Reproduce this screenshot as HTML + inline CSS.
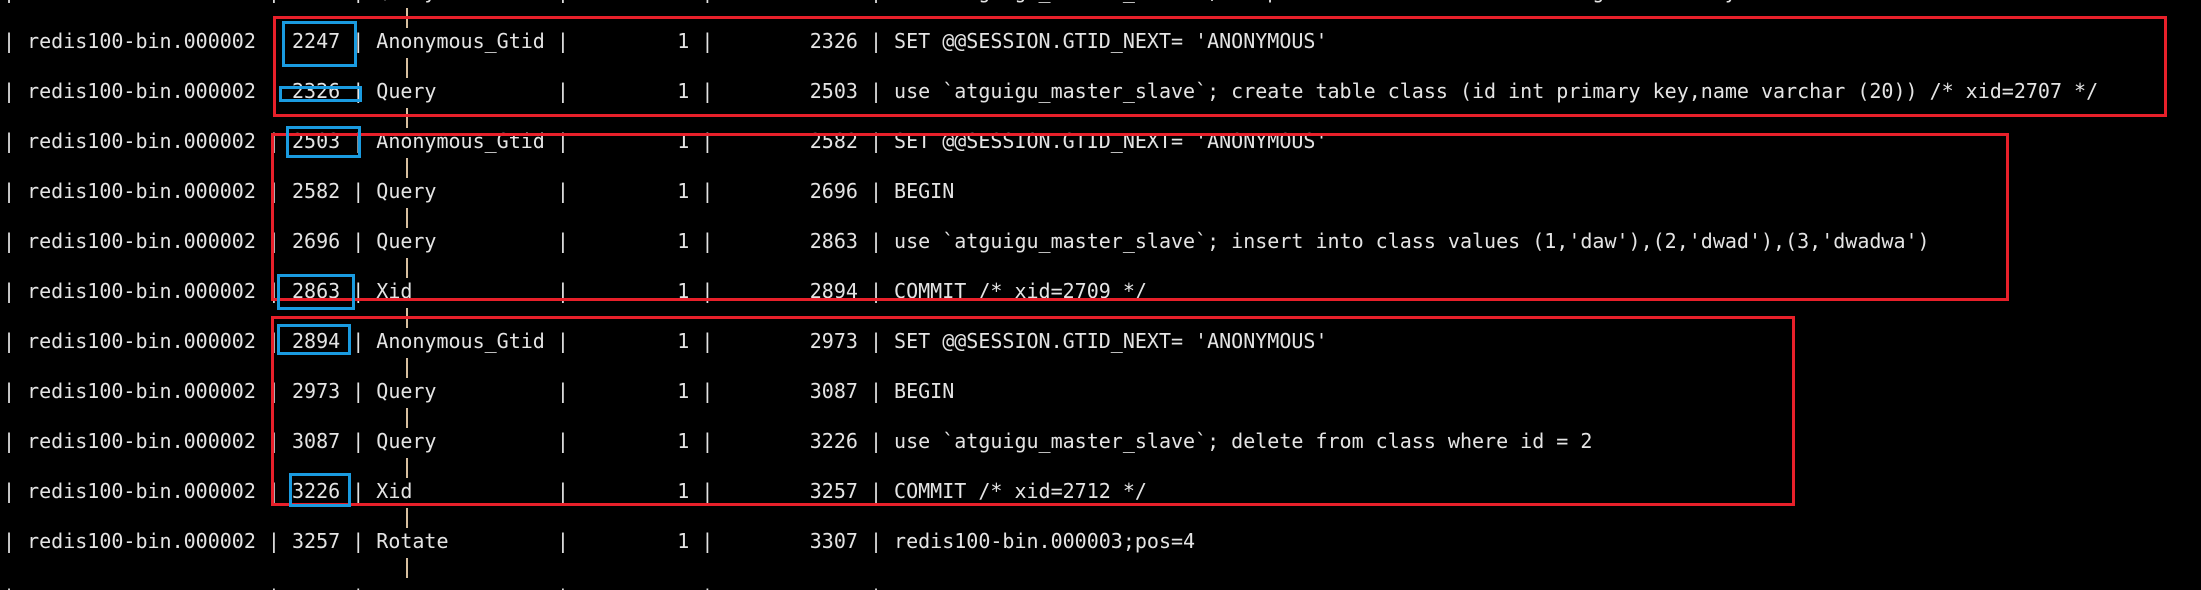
<!DOCTYPE html>
<html><head><meta charset="utf-8">
<style>
html,body{margin:0;padding:0;background:#000;width:2201px;height:590px;overflow:hidden;position:relative}
.r{position:absolute;left:3px;height:50px;line-height:50px;white-space:pre;font-family:"DejaVu Sans Mono","Liberation Mono",monospace;font-size:20px;color:#e4e4e4}
.t{position:absolute;left:406px;width:2px;height:20px;background:#d8c0a0}
.b{position:absolute;box-sizing:border-box}
.red{border:3px solid #e8202a}
.blue{border:3px solid #1a9be0}
</style></head><body>
<div class="r" style="top:0;height:16px;overflow:hidden;line-height:50px"><div style="margin-top:-34px">| redis100-bin.000002 | 2152 | Query          |         1 |        2247 | use `atguigu_master_slave`; drop table if exists class /* generated by server */</div></div>
<div class="r" style="top:16px">| redis100-bin.000002 | 2247 | Anonymous_Gtid |         1 |        2326 | SET @@SESSION.GTID_NEXT= 'ANONYMOUS'</div>
<div class="r" style="top:66px">| redis100-bin.000002 | 2326 | Query          |         1 |        2503 | use `atguigu_master_slave`; create table class (id int primary key,name varchar (20)) /* xid=2707 */</div>
<div class="r" style="top:116px">| redis100-bin.000002 | 2503 | Anonymous_Gtid |         1 |        2582 | SET @@SESSION.GTID_NEXT= 'ANONYMOUS'</div>
<div class="r" style="top:166px">| redis100-bin.000002 | 2582 | Query          |         1 |        2696 | BEGIN</div>
<div class="r" style="top:216px">| redis100-bin.000002 | 2696 | Query          |         1 |        2863 | use `atguigu_master_slave`; insert into class values (1,'daw'),(2,'dwad'),(3,'dwadwa')</div>
<div class="r" style="top:266px">| redis100-bin.000002 | 2863 | Xid            |         1 |        2894 | COMMIT /* xid=2709 */</div>
<div class="r" style="top:316px">| redis100-bin.000002 | 2894 | Anonymous_Gtid |         1 |        2973 | SET @@SESSION.GTID_NEXT= 'ANONYMOUS'</div>
<div class="r" style="top:366px">| redis100-bin.000002 | 2973 | Query          |         1 |        3087 | BEGIN</div>
<div class="r" style="top:416px">| redis100-bin.000002 | 3087 | Query          |         1 |        3226 | use `atguigu_master_slave`; delete from class where id = 2</div>
<div class="r" style="top:466px">| redis100-bin.000002 | 3226 | Xid            |         1 |        3257 | COMMIT /* xid=2712 */</div>
<div class="r" style="top:516px">| redis100-bin.000002 | 3257 | Rotate         |         1 |        3307 | redis100-bin.000003;pos=4</div>
<div class="r" style="top:572px;height:18px;overflow:hidden;line-height:50px">|                     |      |                |           |             |</div>

<div class="t" style="top:8px"></div>
<div class="t" style="top:58px"></div>
<div class="t" style="top:108px"></div>
<div class="t" style="top:158px"></div>
<div class="t" style="top:208px"></div>
<div class="t" style="top:258px"></div>
<div class="t" style="top:308px"></div>
<div class="t" style="top:358px"></div>
<div class="t" style="top:408px"></div>
<div class="t" style="top:458px"></div>
<div class="t" style="top:508px"></div>
<div class="t" style="top:558px"></div>

<div class="b red" style="left:273px;top:16px;width:1894px;height:101px"></div>
<div class="b red" style="left:271px;top:133px;width:1738px;height:168px"></div>
<div class="b red" style="left:271px;top:316px;width:1524px;height:190px"></div>

<div class="b blue" style="left:282px;top:21px;width:75px;height:46px"></div>
<div class="b blue" style="left:279px;top:86px;width:83px;height:16px"></div>
<div class="b blue" style="left:286px;top:126px;width:75px;height:32px"></div>
<div class="b blue" style="left:277px;top:274px;width:78px;height:36px"></div>
<div class="b blue" style="left:277px;top:324px;width:74px;height:31px"></div>
<div class="b blue" style="left:289px;top:473px;width:62px;height:34px"></div>
</body></html>
